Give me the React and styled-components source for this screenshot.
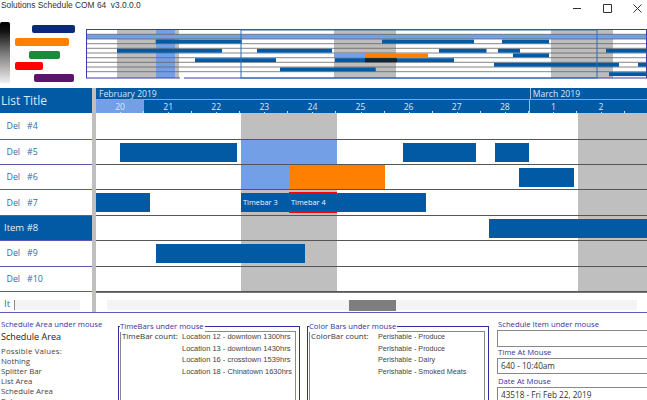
import React from "react";
import styled, { createGlobalStyle } from "styled-components";

const Global = createGlobalStyle`
  html, body { margin: 0; padding: 0; background: #fff; }
  #root { width: 647px; height: 400px; overflow: hidden; }
  * { box-sizing: border-box; }
`;
const BLUE = "#025aa5";
const LIGHT = "#739fe6";
const GREY = "#bfbfbf";
const PURPLE = "#2f2f9f";

const Page = styled.div`
  width: 647px; height: 400px; overflow: hidden; display: flex; flex-direction: column;
  font-family: "Open Sans", sans-serif; background: #fff;
`;
const TitleBar = styled.div`
  height: 21px; flex: none; display: flex; justify-content: space-between; align-items: flex-start;
  padding: 0 0 0 1px;
`;
const TitleText = styled.span`
  font: 8.4px/11px "Liberation Sans", sans-serif; color: #333; white-space: pre;
`;
const WinButtons = styled.div`
  display: flex; gap: 19px; padding: 2px 4px 0 0; height: 15px; align-items: center;
`;
const TopBand = styled.div`
  height: 67px; flex: none; display: flex;
`;
const Legend = styled.div`
  width: 86px; flex: none; display: flex; padding-top: 1px;
`;
const Gradient = styled.div`
  width: 10px; height: 61px; border-radius: 2px; background: linear-gradient(#000 0%, #111 15%, #777 50%, #f0f0f0 100%);
`;
const LegendBars = styled.div`
  display: flex; flex-direction: column; padding-top: 3px; flex: 1;
`;
const LegendBar = styled.div`
  height: 8px; border-radius: 2px; margin-left: ${p => p.$left}px; margin-top: ${p => p.$top}px;
  width: ${p => p.$width}px; background: ${p => p.$color};
`;
const Overview = styled.svg`
  display: block; margin-top: 8px; width: 561px; height: 50px; flex: none;
`;
const Schedule = styled.div`
  height: 204px; flex: none; display: flex;
`;
const ListColumn = styled.div`
  width: 92px; flex: none; display: flex; flex-direction: column;
`;
const ListTitle = styled.div`
  height: 25px; background: ${BLUE}; color: #dfe9f5; font-size: 12px; line-height: 25px; padding-left: 1px; margin-bottom: 1.2px;
`;
const ListRow = styled.div`
  height: 25.4px; display: flex; align-items: center; gap: ${p => p.$selected ? 0 : 7}px;
  padding-left: ${p => p.$selected ? 4 : 6.5}px; font-size: ${p => p.$selected ? 9.5 : 8.8}px;
  border-bottom: 1px solid #5a5ab5;
  background: ${p => p.$selected ? BLUE : "#fff"};
  color: ${p => p.$selected ? "#e6eef8" : "#2f6cab"};
`;
const Splitter = styled.div`
  width: 4px; flex: none; background: ${GREY};
`;
const Timeline = styled.div`
  flex: 1; display: flex; flex-direction: column; min-width: 0;
`;
const MonthRow = styled.div`
  height: 12px; display: flex; background: ${BLUE}; border-bottom: 1px solid #7fa6d2;
`;
const Month = styled.div`
  width: ${p => p.$width}px; flex: none; color: #dbe6f3; font-size: 8.6px; line-height: 12px; padding-left: ${p => p.$pad}px;
  border-left: ${p => p.$line ? "1px solid #9fbede" : "none"};
`;
const DayRow = styled.div`
  height: 13px; display: flex; background: ${BLUE};
`;
const Day = styled.div`
  position: relative; width: ${p => p.$width}px; flex: none; text-align: center; color: #dbe6f3; font-size: 8.6px; line-height: 14px;
  background: ${p => p.$active ? LIGHT : "transparent"};
  border-left: ${p => p.$line ? "1px solid #9fbede" : "none"};
  &::after { content: ""; position: absolute; left: 50%; bottom: 0; width: 1px; height: 1px; background: #cfdff0; }
  &::before { content: ""; position: absolute; right: 0; bottom: 0; width: 1px; height: 2px; background: #cfdff0; }
`;
const Rows = styled.div`
  position: relative; flex: 1; padding-top: 1.2px;
`;
const WeekendColumn = styled.div`
  position: absolute; top: 0; bottom: 0; left: ${p => p.$left}px; width: ${p => p.$width}px; background: ${GREY};
`;
const GanttRow = styled.div`
  position: relative; height: 25.4px; border-bottom: 1px solid #555;
`;
const Bar = styled.div`
  position: absolute; left: ${p => p.$left}px; width: ${p => p.$width}px;
  top: ${p => p.$full ? 0 : 3}px; bottom: ${p => p.$full ? 0 : 2.4}px;
  background: ${p => p.$color || BLUE}; color: #f0f5fb; font-size: 7.4px; line-height: 19px; padding-left: 2px; white-space: nowrap; overflow: hidden;
`;
const RedEdge = styled.div`
  position: absolute; left: ${p => p.$left}px; width: ${p => p.$width}px; top: 2px; bottom: 1.4px;
  border-top: 2px solid #f00; border-bottom: 2px solid #f00;
`;
const ScrollRow = styled.div`
  height: 21px; flex: none; display: flex; border-bottom: 1px solid #5c5cb8;
`;
const ScrollList = styled.div`
  width: 92px; flex: none; display: flex; align-items: flex-start; padding: 6px 0 0 4px; border-top: 1px solid #5a5ab5; margin-top: -1px;
  font-size: 9.5px; line-height: 12px; color: #2f6cab;
`;
const Caret = styled.div`
  width: 66px; height: 10px; margin-left: 4px; margin-top: 2px; background: #f4f4f4; border-left: 1px solid #888;
`;
const ScrollSplitter = styled(Splitter)``;
const ScrollBarZone = styled.div`
  flex: 1; padding: 7px 10px 0 11px; border-top: 1px solid #777;
`;
const ScrollTrack = styled.div`
  height: 10px; background: #f4f4f4; display: flex; padding-left: 242px;
`;
const Thumb = styled.div`
  width: 47px; height: 11px; background: #7e7e7e;
`;
const InfoPanel = styled.div`
  flex: 1; display: flex; min-height: 0; padding: 6px 0 0 1px; font-size: 8px; overflow: hidden;
`;
const AreaColumn = styled.div`
  width: 117px; flex: none; display: flex; flex-direction: column;
`;
const Caption = styled.div`
  color: #33339a; font-size: 7.7px; line-height: 11px; white-space: nowrap;
`;
const AreaValue = styled.div`
  color: #222; font-size: 9px; line-height: 13px; margin: 0 0 3px;
`;
const AreaLine = styled.div`
  color: #444; font-size: 7.8px; line-height: 10px; letter-spacing: ${p => p.$spread ? 0.2 : 0}px; white-space: nowrap;
`;
const Group = styled.div`
  position: relative; width: 182px; flex: none; height: 100px; margin: 7px ${p => p.$after}px 0 0;
  border: 1px solid ${PURPLE}; border-bottom: none; padding: 4px 3px 0 1px;
`;
const GroupLabel = styled.div`
  position: absolute; left: 1px; top: -6px; background: #fff; color: #33339a; font-size: 7.7px; line-height: 11px; padding-right: 1px;
`;
const GroupBox = styled.div`
  height: 100%; border: 1px solid #888; display: flex; padding: 0 0 0 1px;
`;
const GroupKey = styled.div`
  color: #333; font-size: 7.9px; line-height: 11px; width: ${p => p.$w}px; flex: none; margin-top: -1px;
`;
const GroupValues = styled.div`
  display: flex; flex-direction: column; font: ${p => p.$size}px/11.6px "Liberation Sans", sans-serif; color: #444; white-space: nowrap; margin-top: -1px;
`;
const SideColumn = styled.div`
  flex: 1; display: flex; flex-direction: column; min-width: 0; padding-left: 1px;
`;
const Field = styled.div`
  height: 16.5px; flex: none; border: 1px solid #888; margin: 0 -4px 0 -1px; padding-left: 3px; font-size: 8.2px; line-height: 14.5px; color: #333;
`;
const SmallCaption = styled(Caption)`
  margin-top: ${p => p.$top}px;
`;

const days = [["20",48.1,true],["21",48.1],["22",48.1],["23",48.1],["24",48.1],["25",48.1],["26",48.1],["27",48.1],["28",48.1],["1",48.1,false,true],["2",48.1]];

const Sq = ({ d, c = "#333" }) => (
  <svg width="11" height="11" viewBox="0 0 11 11" fill="none" stroke={c} strokeWidth="1"><path d={d} /></svg>
);

const oRows = [34.3, 39, 43.7, 48.3, 53, 57.7, 62.3, 67, 71.7];
const oBars = [
  [155.7,241.7,39.6],[382,474,39.6],[502,549,39.6],
  [117,222,48.8],[257,332,48.8],[439,486.5,48.8],[498,520,48.8],[606,647,48.8],
  [513,549,53.4],
  [195,276,58.2],[335,454,58.2],
  [494,619,62.8],[638,647,62.8],
  [280,375.7,67.5],
  [609,647,72.2],
];

const OverviewMap = () => (
  <Overview viewBox="86 29 561 50">
    <rect x="86.5" y="29.5" width="561" height="48.5" fill="#fff" />
    <rect x="117" y="30" width="39" height="48" fill="#bdbdbd" />
    <rect x="156" y="30" width="19" height="48" fill={LIGHT} />
    <rect x="175" y="30" width="4" height="48" fill="#bdbdbd" />
    <rect x="334" y="30" width="62" height="48" fill="#bdbdbd" />
    <rect x="551" y="30" width="62" height="48" fill="#bdbdbd" />
    <rect x="87" y="34.3" width="560" height="4.7" fill={LIGHT} />
    {oRows.map(y => <line key={y} x1="87" x2="647" y1={y} y2={y} stroke="#666" strokeWidth="0.8" />)}
    {oBars.map(([a,b,y],i) => <rect key={i} x={a} y={y} width={b-a} height="3.9" fill={BLUE} />)}
    <rect x="334" y="53.4" width="31" height="4" fill={LIGHT} />
    <rect x="365" y="53.4" width="63" height="4" fill="#ff8000" />
    <rect x="365" y="58.2" width="32" height="4" fill="#123" />
    <rect x="86.5" y="29.5" width="560" height="48.5" fill="none" stroke="#3a3fa8" />
    <rect x="180" y="77" width="4" height="2" fill="#fff" />
    <rect x="241" y="30" width="356" height="48" fill="none" stroke="#2d6fb5" />
  </Overview>
);

const rowBars = [
  { bars: [] },
  { bars: [[24,116.5],[144.5,96,LIGHT,true],[307,73],[399,34]] },
  { bars: [[144.5,48.5,LIGHT,true],[193,96,"#ff8000",true],[423,55]] },
  { bars: [[0,54],[145,48,null,false,"Timebar 3"],[193,48,null,false,"Timebar 4"],[241,89]], edge: [193,48] },
  { bars: [[393,158]] },
  { bars: [[60,149]] },
  { bars: [] },
];

export default function App() {
  return (
    <Page>
      <Global />
      <TitleBar>
        <TitleText>Solutions Schedule COM 64  v3.0.0.0</TitleText>
        <WinButtons>
          <Sq d="M1 5.5H9" />
          <Sq d="M1.5 1.5H9.5V9.5H1.5Z" />
          <Sq d="M1.5 1.5L9.5 9.5M9.5 1.5L1.5 9.5" />
        </WinButtons>
      </TitleBar>
      <TopBand>
        <Legend>
          <Gradient />
          <LegendBars>
            <LegendBar $left={22} $top={0} $width={43} $color="#0b2a78" />
            <LegendBar $left={5} $top={5} $width={54} $color="#ff8000" />
            <LegendBar $left={19} $top={5} $width={31} $color="#1b8a3a" />
            <LegendBar $left={5} $top={3} $width={28} $color="#ff0000" />
            <LegendBar $left={24} $top={4} $width={40} $color="#5f1170" />
          </LegendBars>
        </Legend>
        <OverviewMap />
      </TopBand>
      <Schedule>
        <ListColumn>
          <ListTitle>List Title</ListTitle>
          <ListRow><span>Del</span><span>#4</span></ListRow>
          <ListRow><span>Del</span><span>#5</span></ListRow>
          <ListRow><span>Del</span><span>#6</span></ListRow>
          <ListRow><span>Del</span><span>#7</span></ListRow>
          <ListRow $selected><span>Item #8</span></ListRow>
          <ListRow><span>Del</span><span>#9</span></ListRow>
          <ListRow><span>Del</span><span>#10</span></ListRow>
        </ListColumn>
        <Splitter />
        <Timeline>
          <MonthRow>
            <Month $width={433.8} $pad={3}>February 2019</Month>
            <Month $width={118} $pad={2} $line>March 2019</Month>
          </MonthRow>
          <DayRow>
            {days.map(([t,w,a,l]) => <Day key={t} $width={w} $active={a} $line={l}>{t}</Day>)}
          </DayRow>
          <Rows>
            <WeekendColumn $left={144.5} $width={96} />
            <WeekendColumn $left={481.5} $width={70} />
            {rowBars.map((row,i) => (
              <GanttRow key={i}>
                {row.bars.map(([l,w,c,f,t],j) => <Bar key={j} $left={l} $width={w} $color={c} $full={f}>{t}</Bar>)}
                {row.edge && <RedEdge $left={row.edge[0]} $width={row.edge[1]} />}
              </GanttRow>
            ))}
          </Rows>
        </Timeline>
      </Schedule>
      <ScrollRow>
        <ScrollList>It<Caret /></ScrollList>
        <ScrollSplitter />
        <ScrollBarZone><ScrollTrack><Thumb /></ScrollTrack></ScrollBarZone>
      </ScrollRow>
      <InfoPanel>
        <AreaColumn>
          <Caption>Schedule Area under mouse</Caption>
          <AreaValue>Schedule Area</AreaValue>
          <AreaLine $spread>Possible Values:</AreaLine>
          <AreaLine>Nothing</AreaLine>
          <AreaLine>Splitter Bar</AreaLine>
          <AreaLine>List Area</AreaLine>
          <AreaLine>Schedule Area</AreaLine>
          <AreaLine>Below</AreaLine>
        </AreaColumn>
        <Group $after={7}>
          <GroupLabel>TimeBars under mouse</GroupLabel>
          <GroupBox>
            <GroupKey $w={60}>TimeBar count:</GroupKey>
            <GroupValues $size={7.5}>
              <span>Location 12 - downtown 1300hrs</span>
              <span>Location 13 - downtown 1430hrs</span>
              <span>Location 16 - crosstown 1539hrs</span>
              <span>Location 18 - Chinatown 1630hrs</span>
            </GroupValues>
          </GroupBox>
        </Group>
        <Group $after={8}>
          <GroupLabel>Color Bars under mouse</GroupLabel>
          <GroupBox>
            <GroupKey $w={67}>ColorBar count:</GroupKey>
            <GroupValues $size={7.2}>
              <span>Perishable - Produce</span>
              <span>Perishable - Produce</span>
              <span>Perishable - Dairy</span>
              <span>Perishable - Smoked Meats</span>
            </GroupValues>
          </GroupBox>
        </Group>
        <SideColumn>
          <Caption>Schedule Item under mouse</Caption>
          <Field />
          <SmallCaption $top={0}>Time At Mouse</SmallCaption>
          <Field>640 - 10:40am</Field>
          <SmallCaption $top={1.5}>Date At Mouse</SmallCaption>
          <Field>43518 - Fri Feb 22, 2019</Field>
        </SideColumn>
      </InfoPanel>
    </Page>
  );
}
